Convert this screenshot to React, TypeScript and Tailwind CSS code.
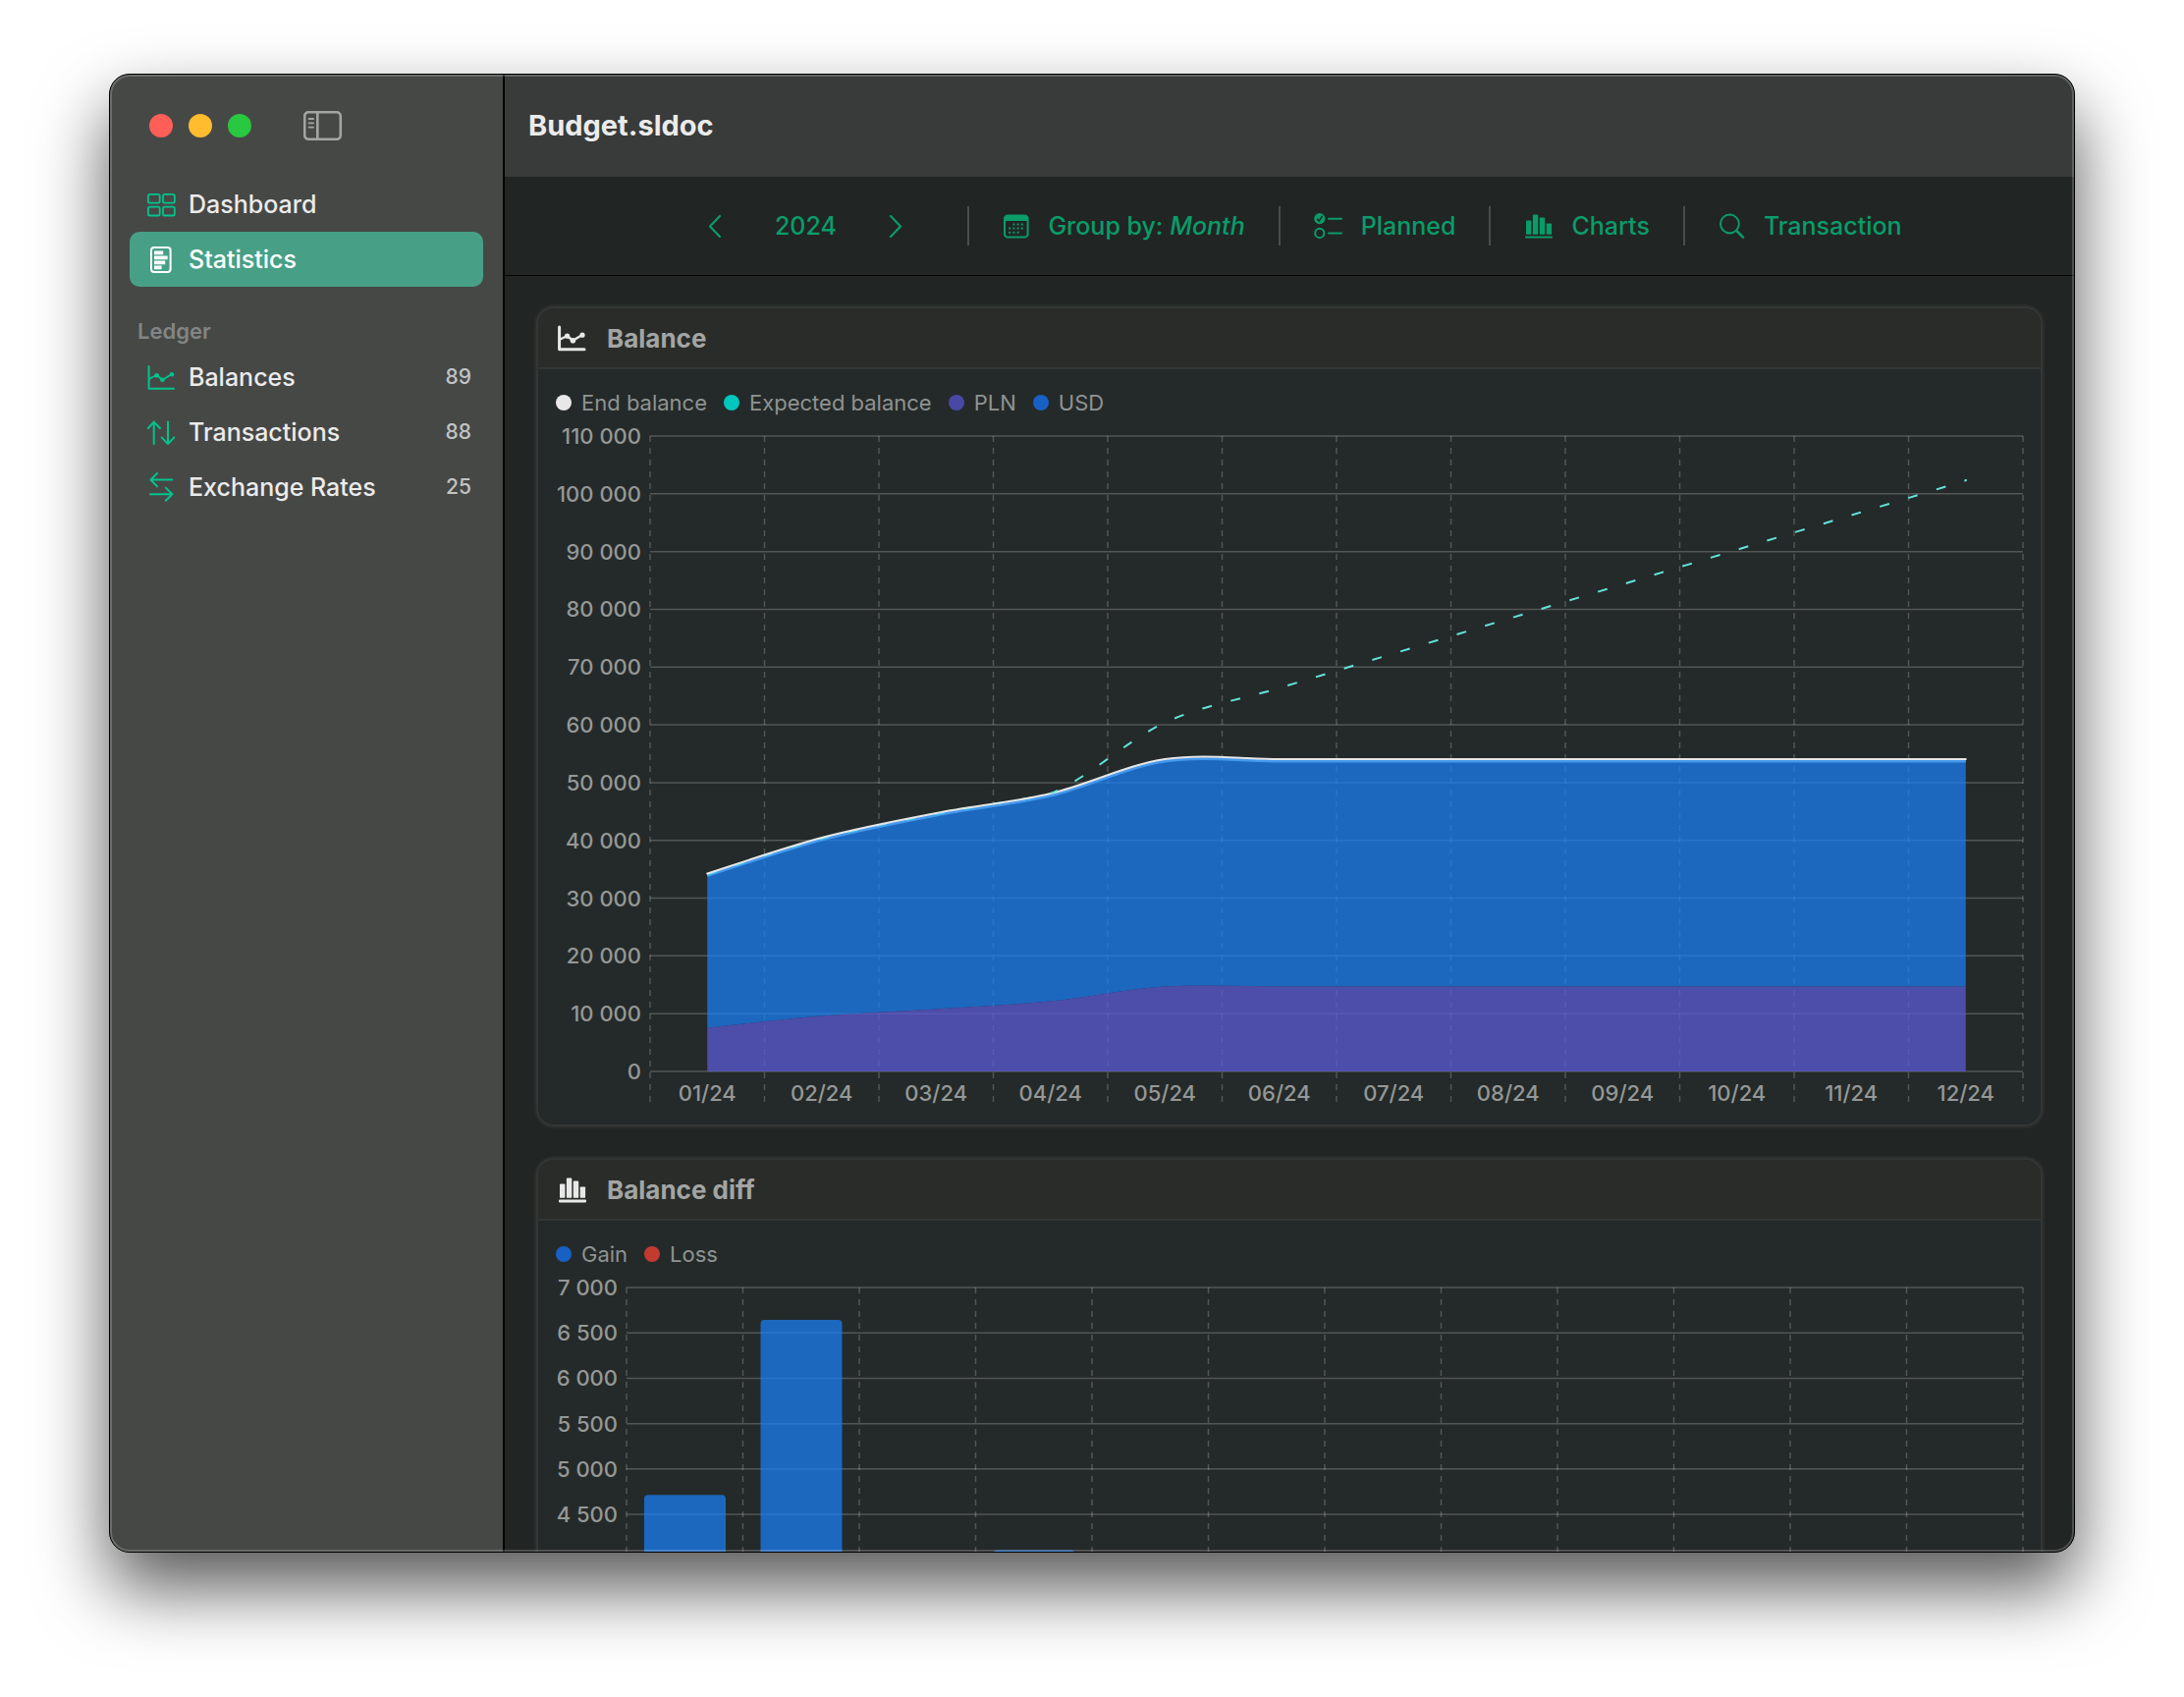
import type { ReactNode } from 'react';

const MONTHS = ['01/24', '02/24', '03/24', '04/24', '05/24', '06/24', '07/24', '08/24', '09/24', '10/24', '11/24', '12/24'];

type Point = [number, number];

/* Catmull-Rom spline through the points, written as cubic segments. */
function spline(points: Point[], from = 0): string {
  let d = `M${points[from][0]} ${points[from][1]}`;
  for (let i = from; i < points.length - 1; i++) {
    const p0 = points[Math.max(i - 1, 0)];
    const p1 = points[i];
    const p2 = points[i + 1];
    const p3 = points[Math.min(i + 2, points.length - 1)];
    d += `C${p1[0] + (p2[0] - p0[0]) / 6} ${p1[1] + (p2[1] - p0[1]) / 6} ${p2[0] - (p3[0] - p1[0]) / 6} ${p2[1] - (p3[1] - p1[1]) / 6} ${p2[0]} ${p2[1]}`;
  }
  return d;
}

/* ---------- icons ---------- */

function SidebarIcon() {
  return (
    <svg width="40" height="30" viewBox="0 0 40 30" fill="none" stroke="#a3a5a4" strokeWidth="2.6" aria-hidden="true">
      <rect x="1.2" y="1.2" width="36.6" height="27.6" rx="4" />
      <path d="M14.3 1.2V28.8" />
      <path d="M5.6 8H10.2M5.6 12.3H10.2M5.6 16.6H10.2" strokeWidth="1.8" strokeLinecap="round" />
    </svg>
  );
}

function GridIcon() {
  return (
    <svg width="30" height="30" viewBox="0 0 30 30" fill="none" stroke="currentColor" strokeWidth="1.8" aria-hidden="true">
      <rect x="0.9" y="4.9" width="11.8" height="8.8" rx="1.6" />
      <rect x="16" y="4.9" width="11.8" height="8.8" rx="1.6" />
      <rect x="0.9" y="17.7" width="11.8" height="8.8" rx="1.6" />
      <rect x="16" y="17.7" width="11.8" height="8.8" rx="1.6" />
    </svg>
  );
}

function DocIcon() {
  return (
    <svg width="30" height="30" viewBox="0 0 30 30" fill="none" stroke="currentColor" aria-hidden="true">
      <rect x="4" y="3" width="19.6" height="25" rx="3" strokeWidth="2" />
      <path d="M7 8.4H16.2M7 13.4H20.6M7 18.4H18.2M7 23.4H14.6" strokeWidth="3.6" />
    </svg>
  );
}

function LineChartIcon({ bold = false }: { bold?: boolean }) {
  return (
    <svg width="30" height="30" viewBox="0 0 30 30" fill="none" stroke="currentColor" strokeWidth={bold ? 3 : 2} strokeLinecap="round" strokeLinejoin="round" aria-hidden="true">
      <path d="M1.6 4V26.8H27" />
      <path d="M2 16.8L9.4 13L15.4 17.8L25 12" strokeWidth={bold ? 2.4 : 1.8} />
      <g fill="currentColor" stroke="none">
        <circle cx="9.6" cy="13.2" r={bold ? 2.6 : 2.3} />
        <circle cx="15.4" cy="17.8" r={bold ? 2.8 : 2.3} />
        <circle cx="25" cy="12.2" r={bold ? 2.6 : 2.3} />
      </g>
    </svg>
  );
}

function UpDownIcon() {
  return (
    <svg width="30" height="30" viewBox="0 0 30 30" fill="none" stroke="currentColor" strokeWidth="2" strokeLinecap="round" strokeLinejoin="round" aria-hidden="true">
      <path d="M6.7 27V4.6M0.9 11L6.7 4.6L13 11" />
      <path d="M21 4.6V27M14.6 20.4L21 27L27.4 20.4" />
    </svg>
  );
}

function SwapIcon() {
  return (
    <svg width="30" height="30" viewBox="0 0 30 30" fill="none" stroke="currentColor" strokeWidth="2" strokeLinecap="round" strokeLinejoin="round" aria-hidden="true">
      <path d="M25.4 7.6H3.4M10 1L3.4 7.6L10 14.2" />
      <path d="M3 22.2H25.4M18.8 15.6L25.4 22.2L18.8 28.8" />
    </svg>
  );
}

function BarsIcon({ bold = false }: { bold?: boolean }) {
  return (
    <svg width="30" height="30" viewBox="0 0 30 30" fill="currentColor" aria-hidden="true">
      <rect x="2" y="9.6" width="5.4" height="14.2" rx="0.9" />
      <rect x="8.9" y="3.6" width="5.4" height="20.2" rx="0.9" />
      <rect x="15.8" y="6.6" width="5.4" height="17.2" rx="0.9" />
      <rect x="22.7" y="12.4" width="5.4" height="11.4" rx="0.9" />
      <rect x="1" y="25.4" width="28" height={bold ? 3 : 2} rx="1" />
    </svg>
  );
}

function CalendarIcon() {
  return (
    <svg width="28" height="26" viewBox="0 0 28 26" fill="none" aria-hidden="true">
      <rect x="2" y="2.6" width="23.6" height="22" rx="3.2" stroke="currentColor" strokeWidth="2" />
      <path d="M2 8V5A3 3 0 0 1 5 2H22.6A3 3 0 0 1 25.6 5V8Z" fill="currentColor" />
      <path d="M10.4 11.4H12.4M14.6 11.4H16.6M18.8 11.4H20.8M6.2 15.6H8.2M10.4 15.6H12.4M14.6 15.6H16.6M18.8 15.6H20.8M6.2 19.8H8.2M10.4 19.8H12.4M14.6 19.8H16.6" stroke="currentColor" strokeWidth="2" />
    </svg>
  );
}

function ChecklistIcon() {
  return (
    <svg width="30" height="28" viewBox="0 0 30 28" fill="none" stroke="currentColor" strokeWidth="2" strokeLinecap="round" aria-hidden="true">
      <circle cx="5.8" cy="6.6" r="5.6" fill="currentColor" stroke="none" />
      <path d="M3.6 7.2L5.2 9.2L8.2 4.4" stroke="#212524" strokeWidth="1.5" />
      <circle cx="5.8" cy="21.4" r="4.6" />
      <path d="M15 6.8H28M15 21.4H28" />
    </svg>
  );
}

function SearchIcon() {
  return (
    <svg width="28" height="28" viewBox="0 0 28 28" fill="none" stroke="currentColor" strokeWidth="2" strokeLinecap="round" aria-hidden="true">
      <circle cx="11.4" cy="12" r="9.4" />
      <path d="M18.4 19L25 25.6" strokeWidth="2.6" />
    </svg>
  );
}

function Chevron({ left = false }: { left?: boolean }) {
  return (
    <svg width="14" height="24" viewBox="0 0 14 24" fill="none" stroke="currentColor" strokeWidth="2.2" strokeLinecap="round" strokeLinejoin="round" aria-hidden="true">
      <path d={left ? 'M12 2L2 12.5L12 23' : 'M2 2L12 12.5L2 23'} />
    </svg>
  );
}

/* ---------- sidebar ---------- */

function NavItem({ icon, label, count, active = false }: { icon: ReactNode; label: string; count?: number; active?: boolean }) {
  return (
    <a
      href="#"
      aria-current={active ? 'page' : undefined}
      className={
        active
          ? 'flex h-14 items-center rounded-[10px] bg-[#47a086] pr-3 pl-[18px] font-medium text-white'
          : 'flex h-14 items-center rounded-[10px] pr-3 pl-[18px] font-medium text-[#00c48c]'
      }
    >
      {icon}
      <span className={active ? 'ml-3 flex-1 pt-0.5 text-[25px] text-white' : 'ml-3 flex-1 pt-0.5 text-[25px] text-[#ebebeb]'}>{label}</span>
      {count !== undefined && <span className="text-[21px] text-[#c2c3c2]">{count}</span>}
    </a>
  );
}

function Sidebar() {
  return (
    <aside className="w-[402px] shrink-0 border-r-2 border-black bg-[#464846] px-5">
      <div className="flex h-[104px] items-center pl-5">
        <div className="flex gap-4">
          <button aria-label="Close" className="size-6 rounded-full bg-[#ff5f57]" />
          <button aria-label="Minimize" className="size-6 rounded-full bg-[#febc2e]" />
          <button aria-label="Zoom" className="size-6 rounded-full bg-[#28c840]" />
        </div>
        <button aria-label="Toggle sidebar" className="ml-[53px]">
          <SidebarIcon />
        </button>
      </div>
      <nav>
        <NavItem icon={<GridIcon />} label="Dashboard" />
        <NavItem icon={<DocIcon />} label="Statistics" active />
        <h2 className="flex h-16 items-end pb-0.5 pl-2 text-[22px] font-semibold text-[#838584]">Ledger</h2>
        <NavItem icon={<LineChartIcon />} label="Balances" count={89} />
        <NavItem icon={<UpDownIcon />} label="Transactions" count={88} />
        <NavItem icon={<SwapIcon />} label="Exchange Rates" count={25} />
      </nav>
    </aside>
  );
}

/* ---------- toolbar ---------- */

function Divider() {
  return <span className="h-10 w-[2px] bg-[#4a4d4c]" />;
}

function Tool({ icon, children }: { icon: ReactNode; children: ReactNode }) {
  return (
    <button className="flex items-center gap-[18px] px-[34px]">
      {icon}
      <span className="pt-0.5">{children}</span>
    </button>
  );
}

function Toolbar() {
  return (
    <div className="flex h-[101px] shrink-0 items-center justify-center border-b border-black text-[25px] font-medium text-[#0a9c69]">
      <div className="flex items-center pr-[66px] pl-[66px]">
        <button aria-label="Previous year">
          <Chevron left />
        </button>
        <span className="w-[170px] pt-0.5 text-center">2024</span>
        <button aria-label="Next year">
          <Chevron />
        </button>
      </div>
      <Divider />
      <Tool icon={<CalendarIcon />}>
        Group by: <em>Month</em>
      </Tool>
      <Divider />
      <Tool icon={<ChecklistIcon />}>Planned</Tool>
      <Divider />
      <Tool icon={<BarsIcon />}>Charts</Tool>
      <Divider />
      <Tool icon={<SearchIcon />}>Transaction</Tool>
    </div>
  );
}

/* ---------- cards ---------- */

function Card({ icon, title, legend, children }: { icon: ReactNode; title: string; legend: [string, string][]; children: ReactNode }) {
  return (
    <section className="shrink-0 overflow-hidden rounded-[18px] border-2 border-[#323634] bg-[#242a29] shadow-[0_0_0_2px_#292d2b]">
      <header className="flex h-[62px] items-center gap-5 border-b-2 border-[#323634] bg-[#292c29] pl-5 text-[#e8e8e8]">
        {icon}
        <h2 className="text-[26px] font-bold text-[#a3a5a4]">{title}</h2>
      </header>
      <div className="px-[18px] pt-5 pb-[18px]">
        <ul className="flex gap-[17px] text-[22px] leading-7 text-[#8f9392]">
          {legend.map(([name, dot]) => (
            <li key={name} className="flex items-center gap-[10px]">
              <span className={`size-4 rounded-full ${dot}`} />
              {name}
            </li>
          ))}
        </ul>
        <div className="mt-5 flex items-start">{children}</div>
      </div>
    </section>
  );
}

function YAxis({ labels, size }: { labels: string[]; size: string }) {
  return (
    <div
      className={`-mt-[14px] flex shrink-0 flex-col justify-between pr-[9px] text-right text-[22px] leading-7 font-medium whitespace-nowrap text-[#959897] ${size}`}
    >
      {labels.map((label) => (
        <span key={label}>{label}</span>
      ))}
    </div>
  );
}

function Plot({ width, rows, label, months = [], children }: { width: number; rows: number; label: string; months?: string[]; children: ReactNode }) {
  return (
    <div className="grid min-w-0 flex-1">
      <svg
        role="img"
        aria-label={label}
        viewBox={`0 0 ${width} 678`}
        preserveAspectRatio="none"
        className="col-start-1 row-start-1 h-[678px] w-full overflow-visible"
      >
        <g stroke="#ffffff" strokeOpacity="0.21" strokeWidth="1.5">
          {Array.from({ length: rows + 1 }, (_, i) => (
            <path key={i} d={`M0 ${(i * 647) / rows}H${width}`} vectorEffect="non-scaling-stroke" />
          ))}
          {Array.from({ length: 13 }, (_, i) => (
            <path key={i} d={`M${(i * width) / 12} 0V678`} strokeDasharray="6 6" vectorEffect="non-scaling-stroke" />
          ))}
        </g>
        {children}
      </svg>
      <div className="col-start-1 row-start-1 mt-[655px] grid h-7 grid-cols-12 text-center text-[22px] leading-7 font-medium text-[#959897]">
        {months.map((m) => (
          <span key={m}>{m}</span>
        ))}
      </div>
    </div>
  );
}

const xAt = (i: number) => (i + 0.5) * 116.5;
const toPoints = (ys: number[]): Point[] => ys.map((y, i) => [xAt(i), y]);

const TOTAL = toPoints([446.5, 410, 385, 365, 330, 330, 330, 330, 330, 330, 330, 330]);
const PLN = toPoints([602.5, 590.5, 583.5, 575.5, 560.5, 560.5, 560.5, 560.5, 560.5, 560.5, 560.5, 560.5]);
const EXPECTED = toPoints([446.5, 410, 385, 364, 291.8, 256.6, 221.4, 186.2, 151, 115.8, 80.6, 45.4]);

function BalanceChart() {
  const total = spline(TOTAL);
  const pln = spline(PLN);
  const plnBack = spline([...PLN].reverse()).replace('M', 'L');
  return (
    <Plot width={1398} rows={11} label="Balance by month" months={MONTHS}>
      <path d={`${total}${plnBack}Z`} fill="#197ef1" fillOpacity="0.75" />
      <path d={`${pln}V647H${xAt(0)}Z`} fill="#5b59d6" fillOpacity="0.75" />
      <path d={total} fill="none" stroke="#4499ee" strokeWidth="3" transform="translate(0 1)" />
      <path d={spline(TOTAL.slice(0, 4))} fill="none" stroke="#3fd0e8" strokeWidth="2" strokeDasharray="10 20" />
      <path d={total} fill="none" stroke="#e6e6e6" strokeWidth="2" strokeLinecap="round" transform="translate(0 -1)" />
      <path d={spline(EXPECTED, 3)} fill="none" stroke="#62e3da" strokeWidth="2" strokeDasharray="10 20" strokeDashoffset="2" />
      <rect x={xAt(11) - 1} y="44" width="2" height="2" fill="#62e3da" />
    </Plot>
  );
}

const DIFFS: [number, number][] = [
  [0, 4715],
  [1, 6643],
  [3, 4105],
];

function DiffChart() {
  return (
    <Plot width={1422} rows={14} label="Balance difference by month">
      {DIFFS.map(([month, value]) => {
        const height = (value / 7000) * 647;
        return <rect key={month} x={month * 118.5 + 18} y={647 - height} width="83" height={height} rx="4" fill="#197ef1" fillOpacity="0.75" />;
      })}
    </Plot>
  );
}

export default function App() {
  return (
    <div className="h-screen bg-white px-[111px] pt-[75px] pb-[147px] font-['Inter',sans-serif]">
      <div className="relative flex h-full overflow-hidden rounded-[21px] border border-black bg-[#212524] shadow-[0_36px_72px_rgba(0,0,0,0.66)]">
        <Sidebar />
        <div className="flex min-w-0 flex-1 flex-col">
          <header className="flex h-[104px] shrink-0 items-center bg-[#383b3a] pl-6">
            <h1 className="text-[29px] font-bold text-[#ebebeb]">Budget.sldoc</h1>
          </header>
          <Toolbar />
          <main className="flex min-h-0 flex-1 flex-col gap-8 overflow-hidden px-8 pt-[31px]">
            <Card
              icon={<LineChartIcon bold />}
              title="Balance"
              legend={[
                ['End balance', 'bg-[#e8e8e8]'],
                ['Expected balance', 'bg-[#00c7be]'],
                ['PLN', 'bg-[#4a48a5]'],
                ['USD', 'bg-[#1861c4]'],
              ]}
            >
              <YAxis
                size="h-[675px] w-24"
                labels={['110 000', '100 000', '90 000', '80 000', '70 000', '60 000', '50 000', '40 000', '30 000', '20 000', '10 000', '0']}
              />
              <BalanceChart />
            </Card>
            <Card
              icon={<BarsIcon bold />}
              title="Balance diff"
              legend={[
                ['Gain', 'bg-[#1861c4]'],
                ['Loss', 'bg-[#c33a31]'],
              ]}
            >
              <YAxis size="h-[259px] w-[72px]" labels={['7 000', '6 500', '6 000', '5 500', '5 000', '4 500']} />
              <DiffChart />
            </Card>
          </main>
        </div>
        <div className="pointer-events-none absolute inset-0 rounded-[20px] border-2 border-white/20" />
      </div>
    </div>
  );
}
